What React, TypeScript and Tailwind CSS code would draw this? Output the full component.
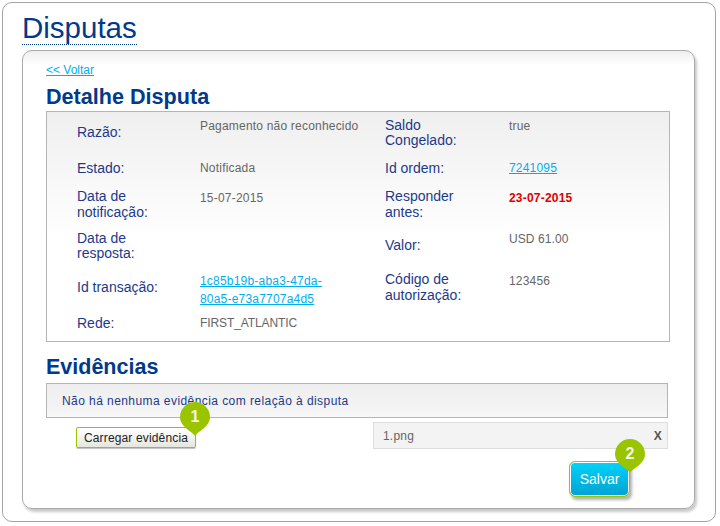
const sans = { fontFamily: '"Liberation Sans", Arial, sans-serif' };

function Pin({ n, className }: { n: string; className: string }) {
  return (
    <div className={`absolute h-[36px] w-[32px] ${className}`}>
      <svg width="32" height="36" viewBox="0 0 32 36" className="block">
        <path d="M16 35 C13 30 1 26 1 16 A15 15 0 0 1 31 16 C31 26 19 30 16 35 Z" fill="#9bc400" />
      </svg>
      <span className="absolute left-0 top-[5px] w-[32px] text-center text-[16px] font-bold leading-[22px] text-[#f4f8e0]">
        {n}
      </span>
    </div>
  );
}

function Row({
  label,
  value,
  label2,
  value2,
  className = '',
  labelClass = 'leading-[16px]',
}: {
  label: React.ReactNode;
  value?: React.ReactNode;
  label2?: React.ReactNode;
  value2?: React.ReactNode;
  className?: string;
  labelClass?: string;
}) {
  return (
    <div className={`grid min-h-[18px] grid-cols-[123px_185px_124px_1fr] items-center pl-[30px] ${className}`}>
      <div className={`text-[14px] text-[#1d3a8a] ${labelClass}`}>{label}</div>
      <div className="self-start text-[12px] leading-[18px] tracking-[0.2px] text-[#666666]">{value}</div>
      <div className={`text-[14px] text-[#1d3a8a] ${labelClass}`}>{label2}</div>
      <div className="self-start text-[12px] leading-[18px] tracking-[0.2px] text-[#666666]">{value2}</div>
    </div>
  );
}

function Link({ children }: { children: React.ReactNode }) {
  return <a className="text-[#00aeef] underline">{children}</a>;
}

export default function App() {
  return (
    <div style={sans} className="h-[526px] w-[720px] overflow-hidden bg-white pl-[2px] pt-[2px]">
      <div className="h-[520px] w-[714px] rounded-[10px] border border-[#a3a3a3] pl-[19px] pt-[8px]">
        <h1 className="w-fit border-b border-dotted border-[#003a8c] text-[29.5px] leading-[33px] text-[#003a8c]">Disputas</h1>
        <div className="relative mt-[5px] h-[459px] w-[673px] rounded-[10px] border border-[#aaaaaa] bg-[linear-gradient(#eeeeee,#ffffff_14px)] pl-[23px] pt-[12px] shadow-[2px_3px_3px_rgba(0,0,0,0.22)]">
          <a className="block text-[12px] leading-[14px] text-[#00aeef] underline">&lt;&lt; Voltar</a>
          <h2 className="mt-[7px] text-[21.6px] font-bold leading-[25px] text-[#003a8c]">Detalhe Disputa</h2>

          <div className="mt-[2px] h-[231px] w-[624px] border border-[#b5b5b5] bg-[linear-gradient(#efefef,#ffffff_55%)] pt-[5px]">
            <Row
              labelClass="leading-[15px]"
              label="Razão:"
              value="Pagamento não reconhecido"
              label2={<span className="block translate-y-[1px]">Saldo<br />Congelado:</span>}
              value2="true"
            />
            <Row className="mt-[12px]" label="Estado:" value="Notificada" label2="Id ordem:" value2={<Link>7241095</Link>} />
            <Row
              className="mt-[12px]"
              labelClass="leading-[16px] -translate-y-[1px]"
              label={<>Data de<br />notificação:</>}
              value="15-07-2015"
              label2={<>Responder<br />antes:</>}
              value2={<span className="font-bold text-[#e00000]">23-07-2015</span>}
            />
            <Row
              className="mt-[9px]"
              labelClass="leading-[15px]"
              label={<span className="block translate-y-[1px]">Data de<br />resposta:</span>}
              label2="Valor:"
              value2={<span className="tracking-[0.1px]">USD 61.00</span>}
            />
            <Row
              className="mt-[12px]"
              labelClass="leading-[16px] -translate-y-[3px]"
              label="Id transação:"
              value={<Link>1c85b19b-aba3-47da-<br />80a5-e73a7707a4d5</Link>}
              label2={<>Código de<br />autorização:</>}
              value2="123456"
            />
            <Row className="mt-[6px]" label="Rede:" value={<span className="tracking-[-0.1px]">FIRST_ATLANTIC</span>} />
          </div>

          <h2 className="mt-[11px] text-[21.5px] font-bold leading-[28px] text-[#003a8c]">Evidências</h2>
          <div className="mt-[2px] flex h-[35px] w-[622px] items-center border border-[#b5b5b5] bg-[linear-gradient(#eeeeee,#f4f4f4_80%,#f8f8f8)] pl-[15px] text-[12px] tracking-[0.43px] text-[#1d3a8a]">
            Não há nenhuma evidência com relação à disputa
          </div>

          <div className="mt-[4px] flex w-[622px] items-start">
            <button className="ml-[30px] mt-[5px] h-[21px] w-[120px] rounded-[2px] border border-[#9bc400] bg-[linear-gradient(#ffffff,#e6e6e0)] text-[12px] tracking-[0.15px] text-[#222222] shadow-[0_1px_1px_rgba(0,0,0,0.25)]">
              Carregar evidência
            </button>
            <div className="ml-[177px] flex h-[27px] flex-1 items-center justify-between border border-[#dddddd] bg-[#f3f3f3] pl-[9px] pr-[5px] text-[12px] tracking-[0.2px] text-[#666666]">
              <span>1.png</span>
              <span className="font-bold text-[#555555]">X</span>
            </div>
          </div>

          <div className="mt-[12px] flex w-[584px] justify-end">
            <button className="h-[36px] w-[61px] rounded-[6px] border border-[#9bc400] bg-[linear-gradient(#00d4fb,#00a2d0)] text-[14px] text-white shadow-[inset_0_0_0_1px_#ffffff,2px_3px_3px_rgba(0,0,0,0.3)]">
              Salvar
            </button>
          </div>

          <Pin n="1" className="left-[156px] top-[350px]" />
          <Pin n="2" className="left-[591px] top-[387px]" />
        </div>
      </div>
    </div>
  );
}
